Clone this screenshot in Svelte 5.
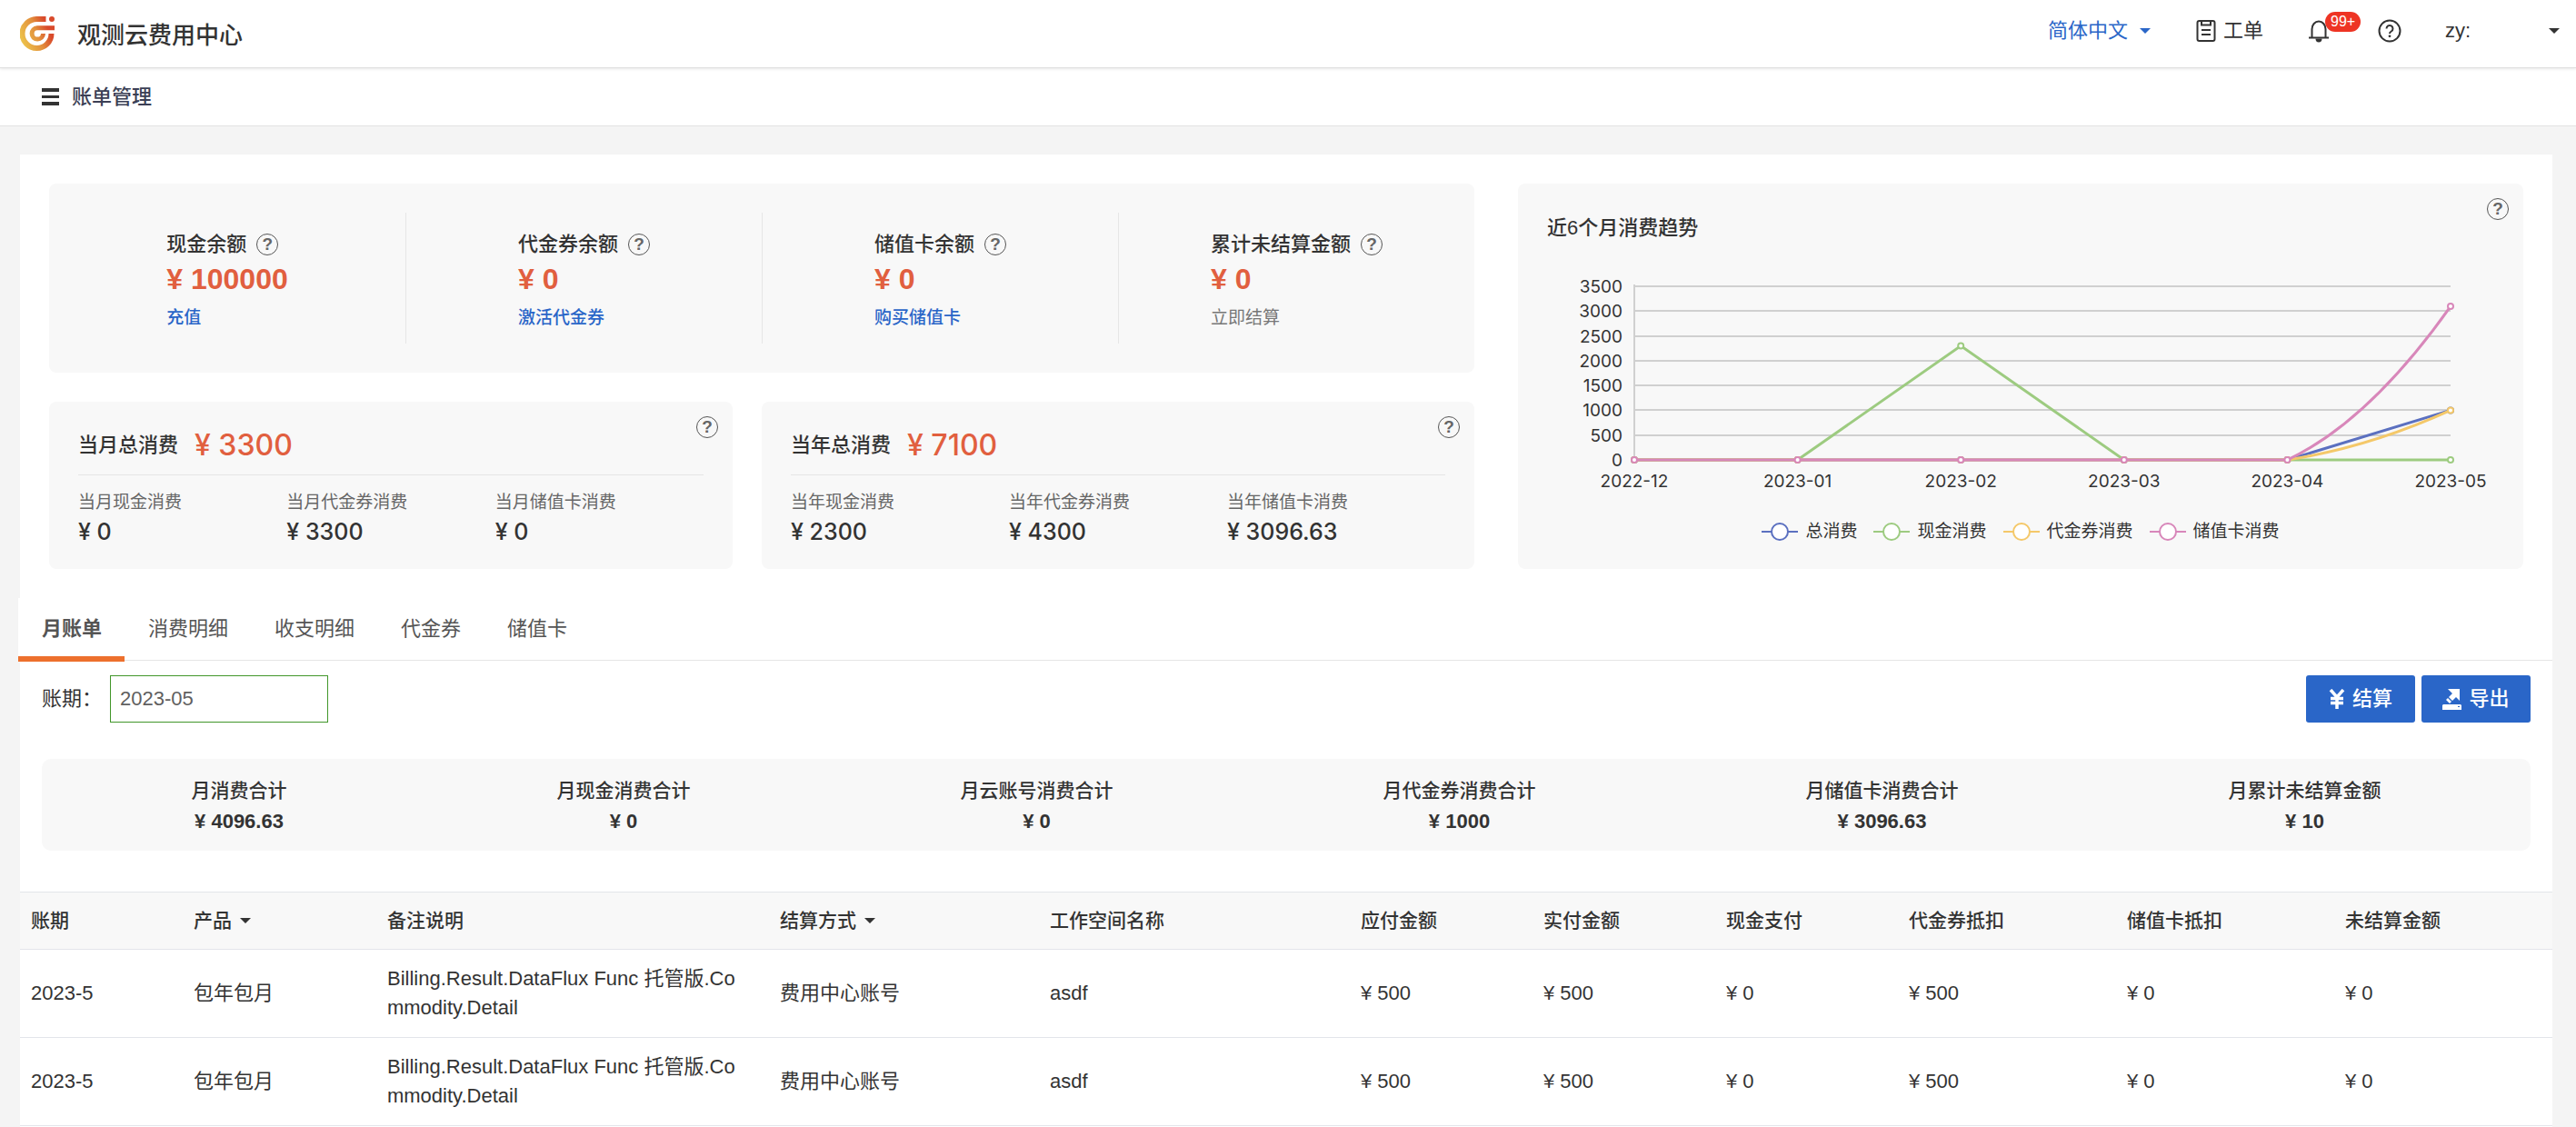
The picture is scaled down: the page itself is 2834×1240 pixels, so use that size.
<script lang="ts">
	interface Series {
		name: string;
		color: string;
		values: number[];
		smooth?: boolean;
	}

	const balances = [
		{ label: "现金余额", value: "100000", action: "充值" },
		{ label: "代金券余额", value: "0", action: "激活代金券" },
		{ label: "储值卡余额", value: "0", action: "购买储值卡" },
		{ label: "累计未结算金额", value: "0", action: "立即结算", disabled: true },
	];

	const periods = [
		{
			label: "当月总消费",
			value: "3300",
			items: [
				["当月现金消费", "0"],
				["当月代金券消费", "3300"],
				["当月储值卡消费", "0"],
			],
		},
		{
			label: "当年总消费",
			value: "7100",
			items: [
				["当年现金消费", "2300"],
				["当年代金券消费", "4300"],
				["当年储值卡消费", "3096.63"],
			],
		},
	];

	const months = ["2022-12", "2023-01", "2023-02", "2023-03", "2023-04", "2023-05"];
	const ticks = [0, 500, 1000, 1500, 2000, 2500, 3000, 3500];
	const series: Series[] = [
		{ name: "总消费", color: "#5b70c0", values: [0, 0, 0, 0, 0, 1000] },
		{ name: "现金消费", color: "#9dcb80", values: [0, 0, 2300, 0, 0, 0] },
		{ name: "代金券消费", color: "#f4c869", values: [0, 0, 0, 0, 0, 1000], smooth: true },
		{ name: "储值卡消费", color: "#d887ba", values: [0, 0, 0, 0, 0, 3096.63], smooth: true },
	];

	// plot area inside the chart's viewBox
	const plot = { left: 128, right: 1026, top: 24, bottom: 215 };

	function px(i: number) {
		return plot.left + (i * (plot.right - plot.left)) / (months.length - 1);
	}

	function py(value: number) {
		return plot.bottom - (value / 3500) * (plot.bottom - plot.top);
	}

	function linePath(s: Series) {
		let d = `M${px(0)} ${py(s.values[0])}`;
		for (let i = 1; i < s.values.length; i++) {
			const prev = s.values[i - 1];
			const value = s.values[i];
			if (s.smooth && value !== prev) {
				d += ` Q${(px(i - 1) + px(i)) / 2} ${py(prev + (value - prev) * 0.25)}`;
				d += ` ${px(i)} ${py(value)}`;
			} else {
				d += ` L${px(i)} ${py(value)}`;
			}
		}
		return d;
	}

	const tabs = ["月账单", "消费明细", "收支明细", "代金券", "储值卡"];
	let activeTab = $state(0);
	let period = $state("2023-05");

	const totals = [
		["月消费合计", "4096.63"],
		["月现金消费合计", "0"],
		["月云账号消费合计", "0"],
		["月代金券消费合计", "1000"],
		["月储值卡消费合计", "3096.63"],
		["月累计未结算金额", "10"],
	];

	const columns = [
		{ title: "账期", width: 179 },
		{ title: "产品", width: 213, filter: true },
		{ title: "备注说明", width: 432 },
		{ title: "结算方式", width: 297, filter: true },
		{ title: "工作空间名称", width: 342 },
		{ title: "应付金额", width: 201 },
		{ title: "实付金额", width: 201 },
		{ title: "现金支付", width: 201 },
		{ title: "代金券抵扣", width: 240 },
		{ title: "储值卡抵扣", width: 240 },
		{ title: "未结算金额", width: 240 },
	];
	const tableWidth = columns.reduce((sum, c) => sum + c.width, 0);

	const bill = [
		"2023-5",
		"包年包月",
		"Billing.Result.DataFlux Func 托管版.Commodity.Detail",
		"费用中心账号",
		"asdf",
		"¥ 500",
		"¥ 500",
		"¥ 0",
		"¥ 500",
		"¥ 0",
		"¥ 0",
	];
	const rows = [bill, bill];
</script>

{#snippet caret()}
	<svg class="caret" viewBox="0 0 12 6" aria-hidden="true"><path d="M0 0h12L6 6z" /></svg>
{/snippet}

<header class="topbar">
	<svg class="logo" viewBox="0 0 38 38" aria-hidden="true">
		<defs>
			<linearGradient id="brand" gradientUnits="userSpaceOnUse" x1="2" y1="26" x2="36" y2="12">
				<stop offset="0" stop-color="#ecc04a" />
				<stop offset="0.5" stop-color="#e28f3c" />
				<stop offset="0.85" stop-color="#d94a2b" />
			</linearGradient>
		</defs>
		<g fill="none" stroke="url(#brand)">
			<path d="M28.500 3H19a16 16 0 1 0 15.500 16" stroke-width="6" />
			<path d="M38 12.700H19a6.200 6.200 0 1 0 6.500 6.300" stroke-width="5" />
		</g>
		<circle cx="35" cy="3" r="3" fill="#d94a2b" />
	</svg>
	<h1>观测云费用中心</h1>

	<nav class="tools">
		<label class="lang">
			<select aria-label="语言">
				<option>简体中文</option>
			</select>
			{@render caret()}
		</label>
		<button class="ticket">
			<svg width="22" height="26" viewBox="0 0 22 26" aria-hidden="true">
				<g fill="none" stroke="currentColor" stroke-width="2">
					<rect x="1.500" y="2" width="19" height="22" rx="2" />
					<path d="M6 2v4.500h10V2M6 12h10M6 17h10" />
				</g>
			</svg>
			工单
		</button>
		<button class="bell" aria-label="通知">
			<svg width="22" height="26" viewBox="0 0 22 26" aria-hidden="true">
				<path
					d="M3.500 20V11a7.500 8.500 0 0 1 15 0v9M0 20.500h22"
					fill="none"
					stroke="currentColor"
					stroke-width="2"
				/>
				<path d="M7.500 21.500h7a3.500 4 0 0 1-7 0z" fill="currentColor" />
			</svg>
			<span class="badge">99+</span>
		</button>
		<button aria-label="帮助">
			<svg width="26" height="26" viewBox="0 0 26 26" aria-hidden="true">
				<g fill="none" stroke="currentColor" stroke-width="2">
					<circle cx="13" cy="13" r="11.500" />
					<path d="M9.500 10.500a3.500 3.500 0 1 1 5.300 3Q13 14.600 13 16" />
				</g>
				<circle cx="13" cy="18.800" r="1.400" fill="currentColor" />
			</svg>
		</button>
		<button class="user">
			<span>zy:</span>
			{@render caret()}
		</button>
	</nav>
</header>

<div class="subbar">
	<button aria-label="菜单">
		<svg width="19" height="19" viewBox="0 0 19 19" aria-hidden="true">
			<path d="M0 0h19v4H0zM0 8h19v3H0zM0 15h19v4H0z" fill="#333" />
		</svg>
	</button>
	<h2>账单管理</h2>
</div>

<main>
	<section class="overview">
		<div class="balances card">
			{#each balances as item}
				<div class="balance">
					<div>
						<h3>
							{item.label}
							<button class="help" aria-label="说明">?</button>
						</h3>
						<p class="amount">¥ {item.value}</p>
						{#if item.disabled}
							<span class="action off">{item.action}</span>
						{:else}
							<a class="action" href="#top">{item.action}</a>
						{/if}
					</div>
				</div>
			{/each}
		</div>

		<div class="periods">
			{#each periods as p}
				<div class="period card">
					<button class="help corner" aria-label="说明">?</button>
					<div class="period-head">
						<h3>{p.label}</h3>
						<span class="sum">¥ {p.value}</span>
					</div>
					<dl>
						{#each p.items as [label, value]}
							<div>
								<dt>{label}</dt>
								<dd>¥ {value}</dd>
							</div>
						{/each}
					</dl>
				</div>
			{/each}
		</div>

		<div class="trend card">
			<button class="help corner" aria-label="说明">?</button>
			<h3>近6个月消费趋势</h3>
			<svg class="chart" viewBox="0 0 1106 250" role="img" aria-label="近6个月消费趋势">
				<path d="M{plot.left} {plot.top - 2}V{plot.bottom}" class="grid" />
				{#each ticks as tick}
					<path d="M{plot.left} {Math.round(py(tick))}H{plot.right}" class="grid" />
					<text x={plot.left - 13} y={py(tick) + 7} text-anchor="end">{tick}</text>
				{/each}
				{#each months as month, i}
					<text x={px(i)} y="245" text-anchor="middle">{month}</text>
				{/each}
				{#each series as s}
					<g stroke={s.color}>
						<path d={linePath(s)} class="line" />
						{#each s.values as value, i}
							<circle cx={px(i)} cy={py(value)} r="3" class="dot" />
						{/each}
					</g>
				{/each}
			</svg>
			<ul class="legend">
				{#each series as s}
					<li>
						<svg width="40" height="22" viewBox="0 0 40 22" aria-hidden="true">
							<g stroke={s.color} stroke-width="2">
								<path d="M0 11h40" />
								<circle cx="20" cy="11" r="9" fill="#fff" />
							</g>
						</svg>
						{s.name}
					</li>
				{/each}
			</ul>
		</div>
	</section>

	<div class="tabs" role="tablist">
		{#each tabs as tab, i}
			<button
				role="tab"
				aria-selected={i === activeTab}
				class={{ tab: true, active: i === activeTab }}
				onclick={() => (activeTab = i)}>{tab}</button
			>
		{/each}
	</div>

	<div class="toolbar">
		<label for="period">账期：</label>
		<input id="period" type="text" bind:value={period} />
		<div class="buttons">
			<button>
				<svg width="18" height="22" viewBox="0 0 18 22" aria-hidden="true">
					<path
						d="M2 1l7 8 7-8M9 8v14M2 10.500h14M2 15.500h14"
						fill="none"
						stroke="#fff"
						stroke-width="3.500"
					/>
				</svg>
				结算
			</button>
			<button>
				<svg width="21" height="23" viewBox="0 0 21 23" fill="#fff" aria-hidden="true">
					<path d="M6 0h13v13l-4-4-4 4-4-4 4-4zM6 10l4 4-2 2-4-4z" />
					<path fill-rule="evenodd" d="M1 17h19l1 1v5H0v-5zM17 19v1h2v-1z" />
				</svg>
				导出
			</button>
		</div>
	</div>

	<dl class="totals">
		{#each totals as [label, value]}
			<div>
				<dt>{label}</dt>
				<dd>¥ {value}</dd>
			</div>
		{/each}
	</dl>

	<table>
		<colgroup>
			{#each columns as col}
				<col style:width="{(col.width / tableWidth) * 100}%" />
			{/each}
		</colgroup>
		<thead>
			<tr>
				{#each columns as col}
					<th>
						{#if col.filter}
							<button class="filter">{col.title}{@render caret()}</button>
						{:else}
							{col.title}
						{/if}
					</th>
				{/each}
			</tr>
		</thead>
		<tbody>
			{#each rows as row}
				<tr>
					{#each row as cell}
						<td>{cell}</td>
					{/each}
				</tr>
			{/each}
		</tbody>
	</table>
</main>

<style>
	:global(body) {
		background: #f4f4f4;
		color: #333;
		font-family: "Liberation Sans", "Noto Sans CJK SC", sans-serif;
		font-size: 22px;
		line-height: 32px;
	}

	h1,
	h2,
	h3,
	p,
	dl,
	dd,
	ul {
		margin: 0;
		padding: 0;
	}

	h1,
	h2,
	h3 {
		font-size: 22px;
		font-weight: 500;
	}

	button,
	select,
	input {
		font: inherit;
		color: inherit;
	}

	button {
		padding: 0;
		border: 0;
		background: none;
		cursor: pointer;
	}

	svg {
		display: block;
		flex-shrink: 0;
	}

	.caret {
		width: 12px;
		height: 6px;
		fill: currentColor;
	}

	.topbar {
		position: relative;
		display: flex;
		align-items: center;
		height: 74px;
		padding: 0 18px 0 22px;
		background: #fff;
		border-bottom: 1px solid #e0e0e0;
		box-shadow: 0 1px 3px #0000001a;
	}

	.logo {
		width: 38px;
		height: 38px;
	}

	h1 {
		margin-left: 25px;
		padding-top: 3px;
		font-size: 26px;
	}

	.tools {
		display: flex;
		align-items: center;
		gap: 48px;
		margin-left: auto;
		padding-bottom: 6px;
	}

	.lang,
	.ticket {
		display: flex;
		align-items: center;
		margin-right: 2px;
	}

	.lang {
		gap: 12px;
		color: #2a66c8;
	}

	.lang select {
		appearance: none;
		padding: 0;
		border: 0;
		background: none;
	}

	.ticket {
		gap: 8px;
	}

	.bell {
		position: relative;
		width: 28px;
	}

	.badge {
		position: absolute;
		left: 18px;
		top: -8px;
		padding: 0 6px;
		border-radius: 11px;
		background: #ee3424;
		color: #fff;
		font-size: 16px;
		line-height: 22px;
	}

	.user {
		display: flex;
		align-items: center;
		justify-content: space-between;
		width: 126px;
	}

	.subbar {
		display: flex;
		align-items: center;
		gap: 14px;
		height: 63px;
		padding: 0 46px;
		background: #fff;
		border-bottom: 1px solid #e2e2e2;
	}

	h2 {
		color: #3b3f55;
	}

	main {
		margin: 31px 26px 0 22px;
		padding-bottom: 1px;
		background: #fff;
	}

	.overview {
		display: grid;
		grid-template-columns: 1568fr 1106fr;
		gap: 32px 48px;
		padding: 32px;
	}

	.card {
		position: relative;
		border-radius: 8px;
		background: #f8f8f8;
	}

	.balances {
		display: grid;
		grid-template-columns: repeat(4, 1fr);
		padding: 32px 0;
	}

	.balance {
		display: flex;
		justify-content: center;
		padding: 19px 0 7px;
	}

	.balance + .balance {
		border-left: 1px solid #e6e6e6;
	}

	.balance h3 {
		display: flex;
		align-items: center;
		gap: 11px;
	}

	.help {
		box-sizing: border-box;
		width: 24px;
		height: 24px;
		border: 1px solid #555;
		border-radius: 50%;
		color: #666;
		font-size: 19px;
		font-weight: 700;
		line-height: 22px;
	}

	.corner {
		position: absolute;
		top: 16px;
		right: 16px;
	}

	.amount {
		color: #e15f3f;
		font-size: 32px;
		font-weight: 700;
		line-height: 44px;
	}

	.action {
		display: block;
		color: #2a66c8;
		font-size: 19px;
		font-weight: 500;
		line-height: 42px;
		text-decoration: none;
	}

	.off {
		color: #777;
		font-weight: 400;
	}

	.periods {
		display: grid;
		grid-template-columns: 752fr 784fr;
		gap: 32px;
	}

	.period {
		padding: 16px 32px 25px;
	}

	.period-head {
		display: flex;
		align-items: center;
		gap: 18px;
		height: 64px;
		border-bottom: 1px solid #e6e6e6;
	}

	.sum,
	.period dd {
		font-family: Inter, "Noto Sans CJK SC", sans-serif;
		font-size: 25px;
		font-weight: 500;
	}

	.period-head .sum {
		color: #e15f3f;
		font-size: 32px;
	}

	.period dl {
		display: grid;
		grid-template-columns: repeat(3, 1fr);
		padding-top: 14px;
	}

	.period dt {
		color: #666;
		font-size: 19px;
	}

	.trend {
		grid-column: 2;
		grid-row: 1 / 3;
	}

	.trend h3 {
		padding: 33px 32px 24px;
	}

	.chart {
		width: 100%;
	}

	.chart text {
		fill: #333;
		font-family: Inter, sans-serif;
		font-size: 19px;
	}

	.grid {
		stroke: #d0d0d0;
		stroke-width: 2;
	}

	.line {
		fill: none;
		stroke-width: 3;
	}

	.dot {
		fill: #fff;
		stroke-width: 2;
	}

	.legend {
		display: flex;
		justify-content: center;
		gap: 18px;
		margin-top: 28px;
		font-size: 19px;
		list-style: none;
	}

	.legend li {
		display: flex;
		align-items: center;
		gap: 8px;
	}

	.tabs {
		display: flex;
		height: 68px;
		margin-left: -2px;
		background: #fff;
		border-bottom: 1px solid #e6e6e6;
	}

	.tab {
		position: relative;
		padding: 0 25px 0 26px;
		color: #555;
	}

	.tab.active {
		font-weight: 700;
	}

	.tab.active::after {
		content: "";
		position: absolute;
		inset: auto 0 -2px;
		height: 6px;
		background: #ed702d;
	}

	.toolbar {
		display: flex;
		align-items: center;
		padding: 16px 24px 0;
	}

	.toolbar input {
		box-sizing: border-box;
		width: 240px;
		height: 52px;
		margin-left: 9px;
		padding: 0 10px;
		border: 1px solid #41962a;
		color: #606060;
		outline: 0;
	}

	.buttons {
		display: flex;
		gap: 7px;
		margin-left: auto;
	}

	.buttons button {
		display: flex;
		align-items: center;
		justify-content: center;
		gap: 8px;
		width: 120px;
		height: 52px;
		border-radius: 3px;
		background: #2a66c8;
		color: #fff;
		font-weight: 500;
	}

	.totals {
		display: flex;
		justify-content: space-around;
		margin: 40px 24px 45px;
		padding: 18px 16px 15px;
		border-radius: 10px;
		background: #f8f8f8;
		line-height: 34px;
		text-align: center;
	}

	.totals dt {
		font-size: 21px;
		font-weight: 500;
	}

	.totals dd {
		font-weight: 700;
	}

	table {
		width: 100%;
		border-spacing: 0;
		table-layout: fixed;
	}

	th,
	td {
		padding: 16px 20px 16px 12px;
		border-bottom: 1px solid #e3e5ea;
		text-align: left;
		word-break: break-all;
	}

	th {
		padding: 15px 12px;
		border-top: 1px solid #e3e5ea;
		background: #f8f8f8;
		font-size: 21px;
		font-weight: 500;
	}

	.filter {
		display: flex;
		align-items: center;
		gap: 9px;
	}
</style>
